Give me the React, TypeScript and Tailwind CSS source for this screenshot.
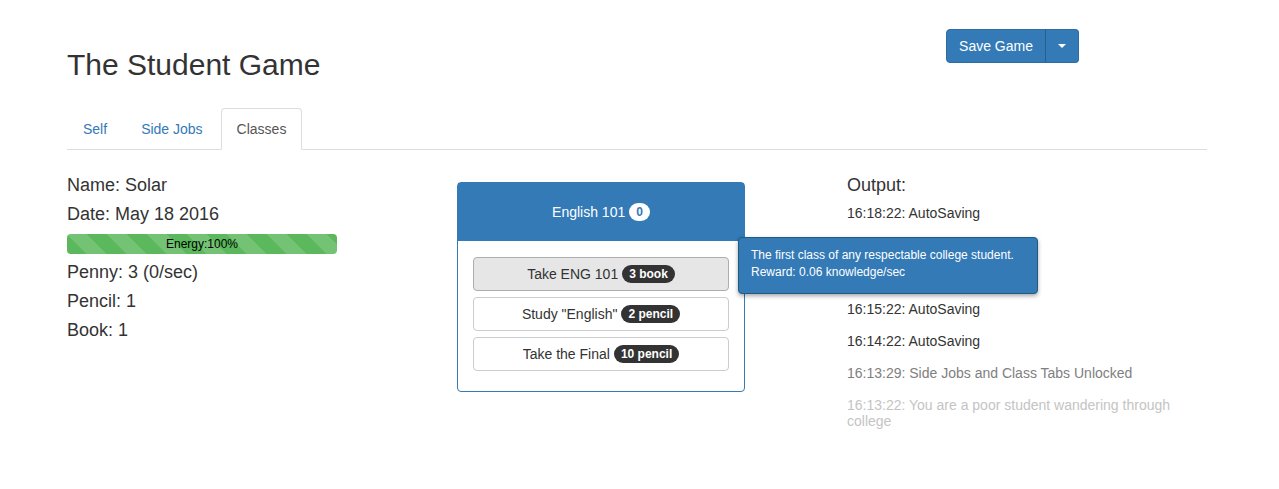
const tabs = ['Self', 'Side Jobs', 'Classes'];

const actions = [
  { label: 'Take ENG 101', cost: '3 book', hover: true },
  { label: 'Study "English"', cost: '2 pencil', hover: false },
  { label: 'Take the Final', cost: '10 pencil', hover: false },
];

// the two rows under the tooltip are covered in the screenshot
const log = [
  { text: '16:18:22: AutoSaving', color: 'text-[#333]' },
  { text: '16:17:22: AutoSaving', color: 'invisible' },
  { text: '16:16:22: AutoSaving', color: 'invisible' },
  { text: '16:15:22: AutoSaving', color: 'text-[#333]' },
  { text: '16:14:22: AutoSaving', color: 'text-[#333]' },
  { text: '16:13:29: Side Jobs and Class Tabs Unlocked', color: 'text-[#808080]' },
  { text: '16:13:22: You are a poor student wandering through college', color: 'text-[#c4c4c4]' },
];

export default function App() {
  return (
    <div className="min-h-[489px] bg-white font-[family-name:Liberation_Sans,Arial,sans-serif] text-[#333]">
      <div className="pl-[67px] pr-[72px]">
        {/* header */}
        <div className="flex items-start">
          <h1 className="mt-[48px] text-[30px] leading-[33px] font-normal">The Student Game</h1>
          <div className="ml-auto mr-[128px] mt-[29px] flex h-[34px] text-[14px] text-white">
            <button className="h-full rounded-l-[4px] border border-[#2e6da4] bg-[#337ab7] px-[12px] leading-[20px]">
              Save Game
            </button>
            <button className="-ml-px flex h-full w-[34px] items-center justify-center rounded-r-[4px] border border-[#2e6da4] border-l-[#285f8f] bg-[#337ab7]">
              <span className="block h-0 w-0 border-x-[4px] border-t-[4px] border-x-transparent border-t-white" />
            </button>
          </div>
        </div>

        {/* tabs */}
        <ul className="mt-[27px] flex border-b border-[#ddd] text-[14px] leading-[20px]">
          {tabs.map((tab) => {
            const active = tab === 'Classes';
            return (
              <li
                key={tab}
                className={
                  active
                    ? '-mb-px mr-[2px] rounded-t-[4px] border border-[#ddd] border-b-white bg-white px-[15px] py-[10px] text-[#555]'
                    : '-mb-px mr-[2px] rounded-t-[4px] border border-transparent px-[15px] py-[10px] text-[#337ab7]'
                }
              >
                {tab}
              </li>
            );
          })}
        </ul>

        {/* body */}
        <div className="grid grid-cols-3 gap-[30px]">
          <div className="pt-[21px] text-[18px] leading-[29px]">
            <div>Name: Solar</div>
            <div>Date: May 18 2016</div>
            <div className="mt-[5px] h-[20px] w-[270px] rounded-[4px] bg-[#5cb85c] bg-[linear-gradient(45deg,rgba(255,255,255,.15)_25%,transparent_25%,transparent_50%,rgba(255,255,255,.15)_50%,rgba(255,255,255,.15)_75%,transparent_75%,transparent)] bg-[length:40px_40px] text-center text-[12px] leading-[20px] text-black">
              Energy:100%
            </div>
            <div className="mt-[4px]">Penny: 3 (0/sec)</div>
            <div>Pencil: 1</div>
            <div>Book: 1</div>
          </div>

          <div className="pt-[32px]">
            <div className="relative w-[288px]">
              <div className="rounded-[4px] border border-[#337ab7] bg-white">
                <div className="flex h-[58px] items-center justify-center gap-[4px] bg-[#337ab7] text-[14px] text-white">
                  <span>English 101</span>
                  <span className="rounded-full bg-white px-[7px] text-[12px] font-bold leading-[18px] text-[#337ab7]">0</span>
                </div>
                <div className="flex flex-col gap-[6px] px-[15px] pt-[16px] pb-[20px]">
                  {actions.map((a) => (
                    <button
                      key={a.label}
                      className={
                        a.hover
                          ? 'flex h-[34px] items-center justify-center gap-[4px] rounded-[4px] border border-[#adadad] bg-[#e6e6e6] text-[14px] text-[#333]'
                          : 'flex h-[34px] items-center justify-center gap-[4px] rounded-[4px] border border-[#ccc] bg-white text-[14px] text-[#333]'
                      }
                    >
                      <span>{a.label}</span>
                      <span className="rounded-full bg-[#333] px-[7px] text-[12px] font-bold leading-[18px] text-white">
                        {a.cost}
                      </span>
                    </button>
                  ))}
                </div>
              </div>

              <div className="absolute left-[281px] top-[55px] z-10 h-[57px] w-[300px] rounded-[4px] border border-[#1f5d80] bg-[#337ab7] px-[12px] pt-[9px] text-[12px] leading-[17px] text-white shadow-[0_2px_4px_rgba(0,0,0,0.35)]">
                <div>The first class of any respectable college student.</div>
                <div>Reward: 0.06 knowledge/sec</div>
              </div>
            </div>
          </div>

          <div className="pt-[21px]">
            <div className="text-[18px] leading-[29px]">Output:</div>
            <div className="mt-[5px] flex flex-col gap-[16px] text-[14px] leading-[16px]">
              {log.map((l) => (
                <div key={l.text} className={l.color}>
                  {l.text}
                </div>
              ))}
            </div>
          </div>
        </div>
      </div>
    </div>
  );
}
